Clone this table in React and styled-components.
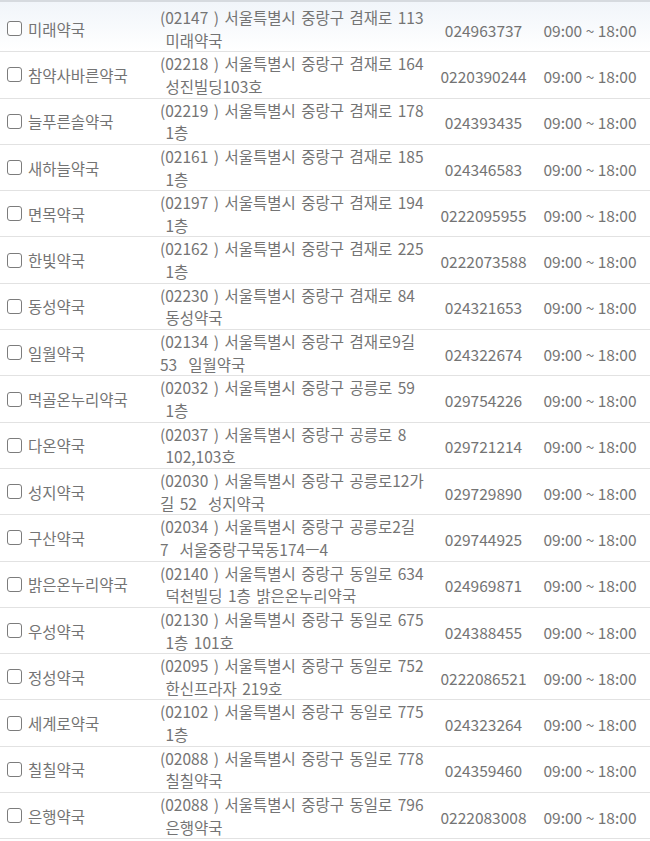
import React from "react";
import styled, { createGlobalStyle } from "styled-components";

const GlobalStyle = createGlobalStyle`
  body {
    margin: 0;
    background: #ffffff;
    font-family: "Noto Sans CJK KR", "Noto Sans", sans-serif;
  }
`;

const List = styled.div`
  width: 650px;
  border-top: 2px solid #d6dadf;
`;

const Row = styled.div`
  display: grid;
  grid-template-columns: 160px 272px 103px 110px;
  align-items: center;
  height: 45.3px;
  padding-top: ${(p) => (p.$first ? "4px" : "0")};
  box-sizing: content-box;
  border-bottom: 1px solid #e2e2e2;
  background: ${(p) =>
    p.$first ? "linear-gradient(to bottom, #f1f5fa, #ffffff)" : "#ffffff"};
  color: #747474;
  font-size: 15.5px;
`;

const NameCell = styled.label`
  display: flex;
  align-items: center;
  gap: 6px;
  padding-left: 7px;
  white-space: nowrap;
`;

const Check = styled.input.attrs({ type: "checkbox" })`
  appearance: none;
  margin: 0;
  width: 15px;
  height: 15px;
  border: 1.6px solid #7c7c7c;
  border-radius: 3px;
  box-sizing: border-box;
  background: #fff;
  flex: none;
`;

const AddrCell = styled.div`
  line-height: 22.65px;
  word-spacing: 2px;
`;

const Line = styled.span`
  display: block;
  white-space: pre;
`;

const Center = styled.div`
  text-align: center;
  white-space: nowrap;
  padding-top: 2px;
`;

const rows = [
  ["미래약국", "(02147 ) 서울특별시 중랑구 겸재로 113", " 미래약국", "024963737"],
  ["참약사바른약국", "(02218 ) 서울특별시 중랑구 겸재로 164", " 성진빌딩103호", "0220390244"],
  ["늘푸른솔약국", "(02219 ) 서울특별시 중랑구 겸재로 178", " 1층", "024393435"],
  ["새하늘약국", "(02161 ) 서울특별시 중랑구 겸재로 185", " 1층", "024346583"],
  ["면목약국", "(02197 ) 서울특별시 중랑구 겸재로 194", " 1층", "0222095955"],
  ["한빛약국", "(02162 ) 서울특별시 중랑구 겸재로 225", " 1층", "0222073588"],
  ["동성약국", "(02230 ) 서울특별시 중랑구 겸재로 84", " 동성약국", "024321653"],
  ["일월약국", "(02134 ) 서울특별시 중랑구 겸재로9길", "53  일월약국", "024322674"],
  ["먹골온누리약국", "(02032 ) 서울특별시 중랑구 공릉로 59", " 1층", "029754226"],
  ["다온약국", "(02037 ) 서울특별시 중랑구 공릉로 8", " 102,103호", "029721214"],
  ["성지약국", "(02030 ) 서울특별시 중랑구 공릉로12가", "길 52  성지약국", "029729890"],
  ["구산약국", "(02034 ) 서울특별시 중랑구 공릉로2길", "7  서울중랑구묵동174ㅡ4", "029744925"],
  ["밝은온누리약국", "(02140 ) 서울특별시 중랑구 동일로 634", " 덕천빌딩 1층 밝은온누리약국", "024969871"],
  ["우성약국", "(02130 ) 서울특별시 중랑구 동일로 675", " 1층 101호", "024388455"],
  ["정성약국", "(02095 ) 서울특별시 중랑구 동일로 752", " 한신프라자 219호", "0222086521"],
  ["세계로약국", "(02102 ) 서울특별시 중랑구 동일로 775", " 1층", "024323264"],
  ["칠칠약국", "(02088 ) 서울특별시 중랑구 동일로 778", " 칠칠약국", "024359460"],
  ["은행약국", "(02088 ) 서울특별시 중랑구 동일로 796", " 은행약국", "0222083008"],
];

export default function App() {
  return (
    <>
      <GlobalStyle />
      <List>
        {rows.map(([name, addr1, addr2, tel], i) => (
          <Row key={name} $first={i === 0}>
            <NameCell>
              <Check />
              {name}
            </NameCell>
            <AddrCell>
              <Line>{addr1}</Line>
              <Line>{addr2}</Line>
            </AddrCell>
            <Center>{tel}</Center>
            <Center>09:00 ~ 18:00</Center>
          </Row>
        ))}
      </List>
    </>
  );
}
